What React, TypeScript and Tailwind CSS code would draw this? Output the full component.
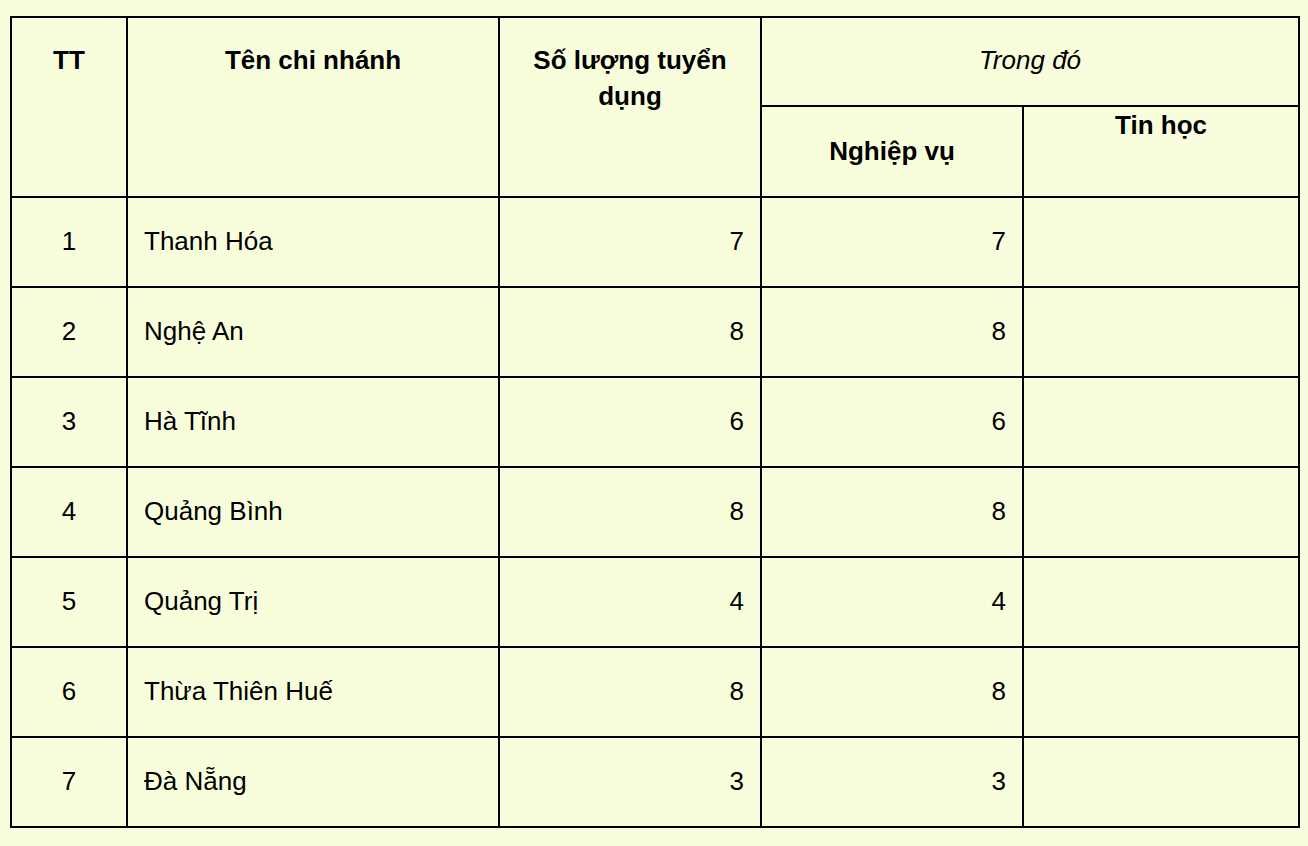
const rows = [
  { tt: 1, name: 'Thanh Hóa', total: 7, nghiepVu: 7 },
  { tt: 2, name: 'Nghệ An', total: 8, nghiepVu: 8 },
  { tt: 3, name: 'Hà Tĩnh', total: 6, nghiepVu: 6 },
  { tt: 4, name: 'Quảng Bình', total: 8, nghiepVu: 8 },
  { tt: 5, name: 'Quảng Trị', total: 4, nghiepVu: 4 },
  { tt: 6, name: 'Thừa Thiên Huế', total: 8, nghiepVu: 8 },
  { tt: 7, name: 'Đà Nẵng', total: 3, nghiepVu: 3 },
];

const cell = 'border-r-2 border-b-2 border-black';

export default function App() {
  return (
    <div
      className="min-h-screen bg-[#f8fedc] pl-[10px] pt-[16px] text-black"
      style={{ fontFamily: '"Liberation Sans", Arial, Helvetica, sans-serif' }}
    >
      <div className="grid w-fit grid-cols-[116px_372px_262px_262px_276px] grid-rows-[89px_91px_repeat(7,90px)] border-l-2 border-t-2 border-black text-[26px] leading-[36px]">
        {/* Header */}
        <div className={`${cell} row-span-2 pt-6 text-center font-bold`}>TT</div>
        <div className={`${cell} row-span-2 pt-6 text-center font-bold`}>Tên chi nhánh</div>
        <div className={`${cell} row-span-2 px-4 pt-6 text-center font-bold`}>Số lượng tuyển dụng</div>
        <div className={`${cell} col-span-2 pt-6 text-center italic`}>Trong đó</div>
        <div className={`${cell} flex items-center justify-center pb-[2px] font-bold`}>Nghiệp vụ</div>
        <div className={`${cell} text-center font-bold`}>Tin học</div>

        {/* Body */}
        {rows.map((r) => (
          <div key={r.tt} className="contents">
            <div className={`${cell} flex items-center justify-center pb-[2px]`}>{r.tt}</div>
            <div className={`${cell} flex items-center pb-[2px] pl-4`}>{r.name}</div>
            <div className={`${cell} flex items-center justify-end pb-[2px] pr-4`}>{r.total}</div>
            <div className={`${cell} flex items-center justify-end pb-[2px] pr-4`}>{r.nghiepVu}</div>
            <div className={cell} />
          </div>
        ))}
      </div>
    </div>
  );
}
